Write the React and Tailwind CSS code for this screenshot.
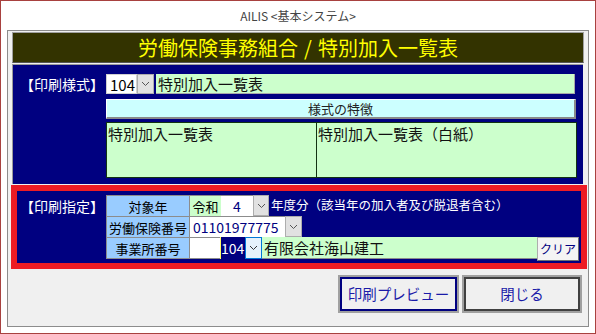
import React from 'react';

const FONT = { fontFamily: '"Noto Sans CJK JP", "Noto Sans", sans-serif' };

function Chevron({ color = '#555' }) {
    return (
        <svg width="9" height="6" viewBox="0 0 9 6">
            <polyline points="1,1 4.5,4.5 8,1" fill="none" stroke={color} strokeWidth="1" />
        </svg>
    );
}

function ArrowButton({ className = '' }) {
    return (
        <div className={`flex items-center justify-center bg-[#e1e1e1] border border-[#adadad] ${className}`}>
            <Chevron />
        </div>
    );
}

export default function App() {
    return (
        <div className="w-[596px] h-[334px] border border-[#a8413f] bg-white flex flex-col overflow-hidden" style={FONT}>
            {/* window caption */}
            <div className="h-[29px] flex items-center justify-center text-[12px] leading-none text-[#444]">
                AILIS &lt;基本システム&gt;
            </div>

            <div className="ml-[6px] w-[582px] h-[297px] border border-[#8c8c8c] bg-[#f0f0f0]">
                {/* title bar */}
                <div className="ml-[4px] mt-[1px] w-[572px] h-[31px] bg-[#333300] border border-[#a0a0a0] border-b-[#555] flex items-center justify-center">
                    <span className="text-[20px] leading-none text-[#ffff00] whitespace-nowrap">
                        労働保険事務組合<span className="px-[6px]">/</span>特別加入一覧表
                    </span>
                </div>

                {/* 印刷様式 */}
                <div className="ml-[4px] mt-[1px] w-[571px] h-[120px] bg-[#000080] border-t border-l border-[#9a9a9a] flex">
                    <div className="w-[93px] pt-[9px] pl-[7px]">
                        <div className="h-[20px] flex items-center text-[14px] leading-none text-white whitespace-nowrap">【印刷様式】</div>
                    </div>
                    <div className="flex-1 pt-[9px] pr-[6px] flex flex-col">
                        <div className="h-[20px] flex">
                            <div className="w-[31px] bg-white border border-[#d0d0d0] flex items-center pl-[3px] text-[15px] leading-none text-black">104</div>
                            <ArrowButton className="w-[17px]" />
                            <div className="ml-[2px] w-[419px] bg-[#ccffcc] border-b border-r border-[#a8a8a8] flex items-center pl-[2px] text-[15px] leading-none text-[#111]">
                                特別加入一覧表
                            </div>
                        </div>
                        <div className="mt-[5px] h-[20px] w-[470px] bg-[#ccffff] border-t border-l border-white border-b-2 border-r-2 border-b-[#8a8a8a] border-r-[#8a8a8a] flex items-center justify-center text-[13px] leading-none text-[#222]">
                            様式の特徴
                        </div>
                        <div className="mt-[3px] h-[56px] w-[471px] bg-[#ccffcc] border border-[#123312] flex">
                            <div className="w-[210px] border-r border-[#123312] pl-[1px] pt-[3px] text-[15px] leading-none text-[#111]">特別加入一覧表</div>
                            <div className="flex-1 pl-[1px] pt-[3px] text-[15px] leading-none text-[#111]">特別加入一覧表（白紙）</div>
                        </div>
                    </div>
                </div>

                {/* 印刷指定 */}
                <div className="ml-[3px] mt-[1px] w-[576px] h-[84px] border-[6px] border-[#ed1c24] bg-[#000080] flex">
                    <div className="w-[89px] pt-[4px] pl-[3px]">
                        <div className="h-[21px] flex items-center text-[14px] leading-none text-white whitespace-nowrap">【印刷指定】</div>
                    </div>
                    <div className="pt-[4px] flex flex-col text-[13px] leading-none">
                        <div className="h-[21px] flex">
                            <div className="w-[84px] bg-[#99ccff] border-l border-t border-r border-[#8c8c8c] flex items-center justify-center text-black">対象年</div>
                            <div className="w-[31px] bg-[#ccffcc] border-t border-[#8c8c8c] flex items-center justify-center text-black">令和</div>
                            <div className="w-[32px] bg-white border-t border-[#8c8c8c] flex items-center justify-center text-[14px] text-[#000080]">4</div>
                            <ArrowButton className="w-[16px]" />
                            <div className="ml-[2px] flex items-center text-[12.5px] text-white whitespace-nowrap">年度分（該当年の加入者及び脱退者含む）</div>
                        </div>
                        <div className="h-[21px] flex">
                            <div className="w-[84px] bg-[#99ccff] border-l border-t border-r border-[#8c8c8c] flex items-center justify-center text-black whitespace-nowrap">労働保険番号</div>
                            <div className="w-[95px] bg-white border-t border-[#8c8c8c] flex items-center pl-[3px] text-[14px] text-[#000080]">01101977775</div>
                            <ArrowButton className="w-[17px]" />
                        </div>
                        <div className="h-[22px] flex">
                            <div className="w-[84px] bg-[#99ccff] border border-[#8c8c8c] flex items-center justify-center text-black">事業所番号</div>
                            <div className="w-[30px] bg-white border-t border-b border-[#8c8c8c]" />
                            <div className="w-[25px] bg-[#000080] border-l border-[#ffff66] flex items-center text-[14px] text-white">104</div>
                            <div className="w-[17px] bg-[#e5f1fb] border border-[#0078d7] flex items-center justify-center">
                                <Chevron color="#333" />
                            </div>
                            <div className="w-[275px] bg-[#ccffcc] border-b border-[#8c8c8c] flex items-center pl-[2px] text-[15px] text-[#111]">有限会社海山建工</div>
                            <div className="w-[42px] h-[24px] bg-[#f4f4f4] border border-[#adadad] border-b-[#707070] border-r-[#707070] flex items-center justify-center text-[12px] text-[#000080]">
                                クリア
                            </div>
                        </div>
                    </div>
                </div>

                {/* buttons */}
                <div className="mt-[6px] pr-[6px] flex justify-end gap-[3px]">
                    <button type="button" className="w-[121px] h-[38px] border-2 border-[#a0a0a0] bg-[#f0f0f0] p-0">
                        <div className="w-full h-full border-2 border-[#000080] flex items-center justify-center text-[14.5px] leading-none text-[#1a1aa8]">
                            印刷プレビュー
                        </div>
                    </button>
                    <button type="button" className="w-[120px] h-[38px] border-2 border-[#a0a0a0] bg-[#f0f0f0] p-0">
                        <div className="w-full h-full border-2 border-[#404040] flex items-center justify-center text-[14.5px] leading-none text-[#1a1aa8]">
                            閉じる
                        </div>
                    </button>
                </div>
            </div>
        </div>
    );
}
